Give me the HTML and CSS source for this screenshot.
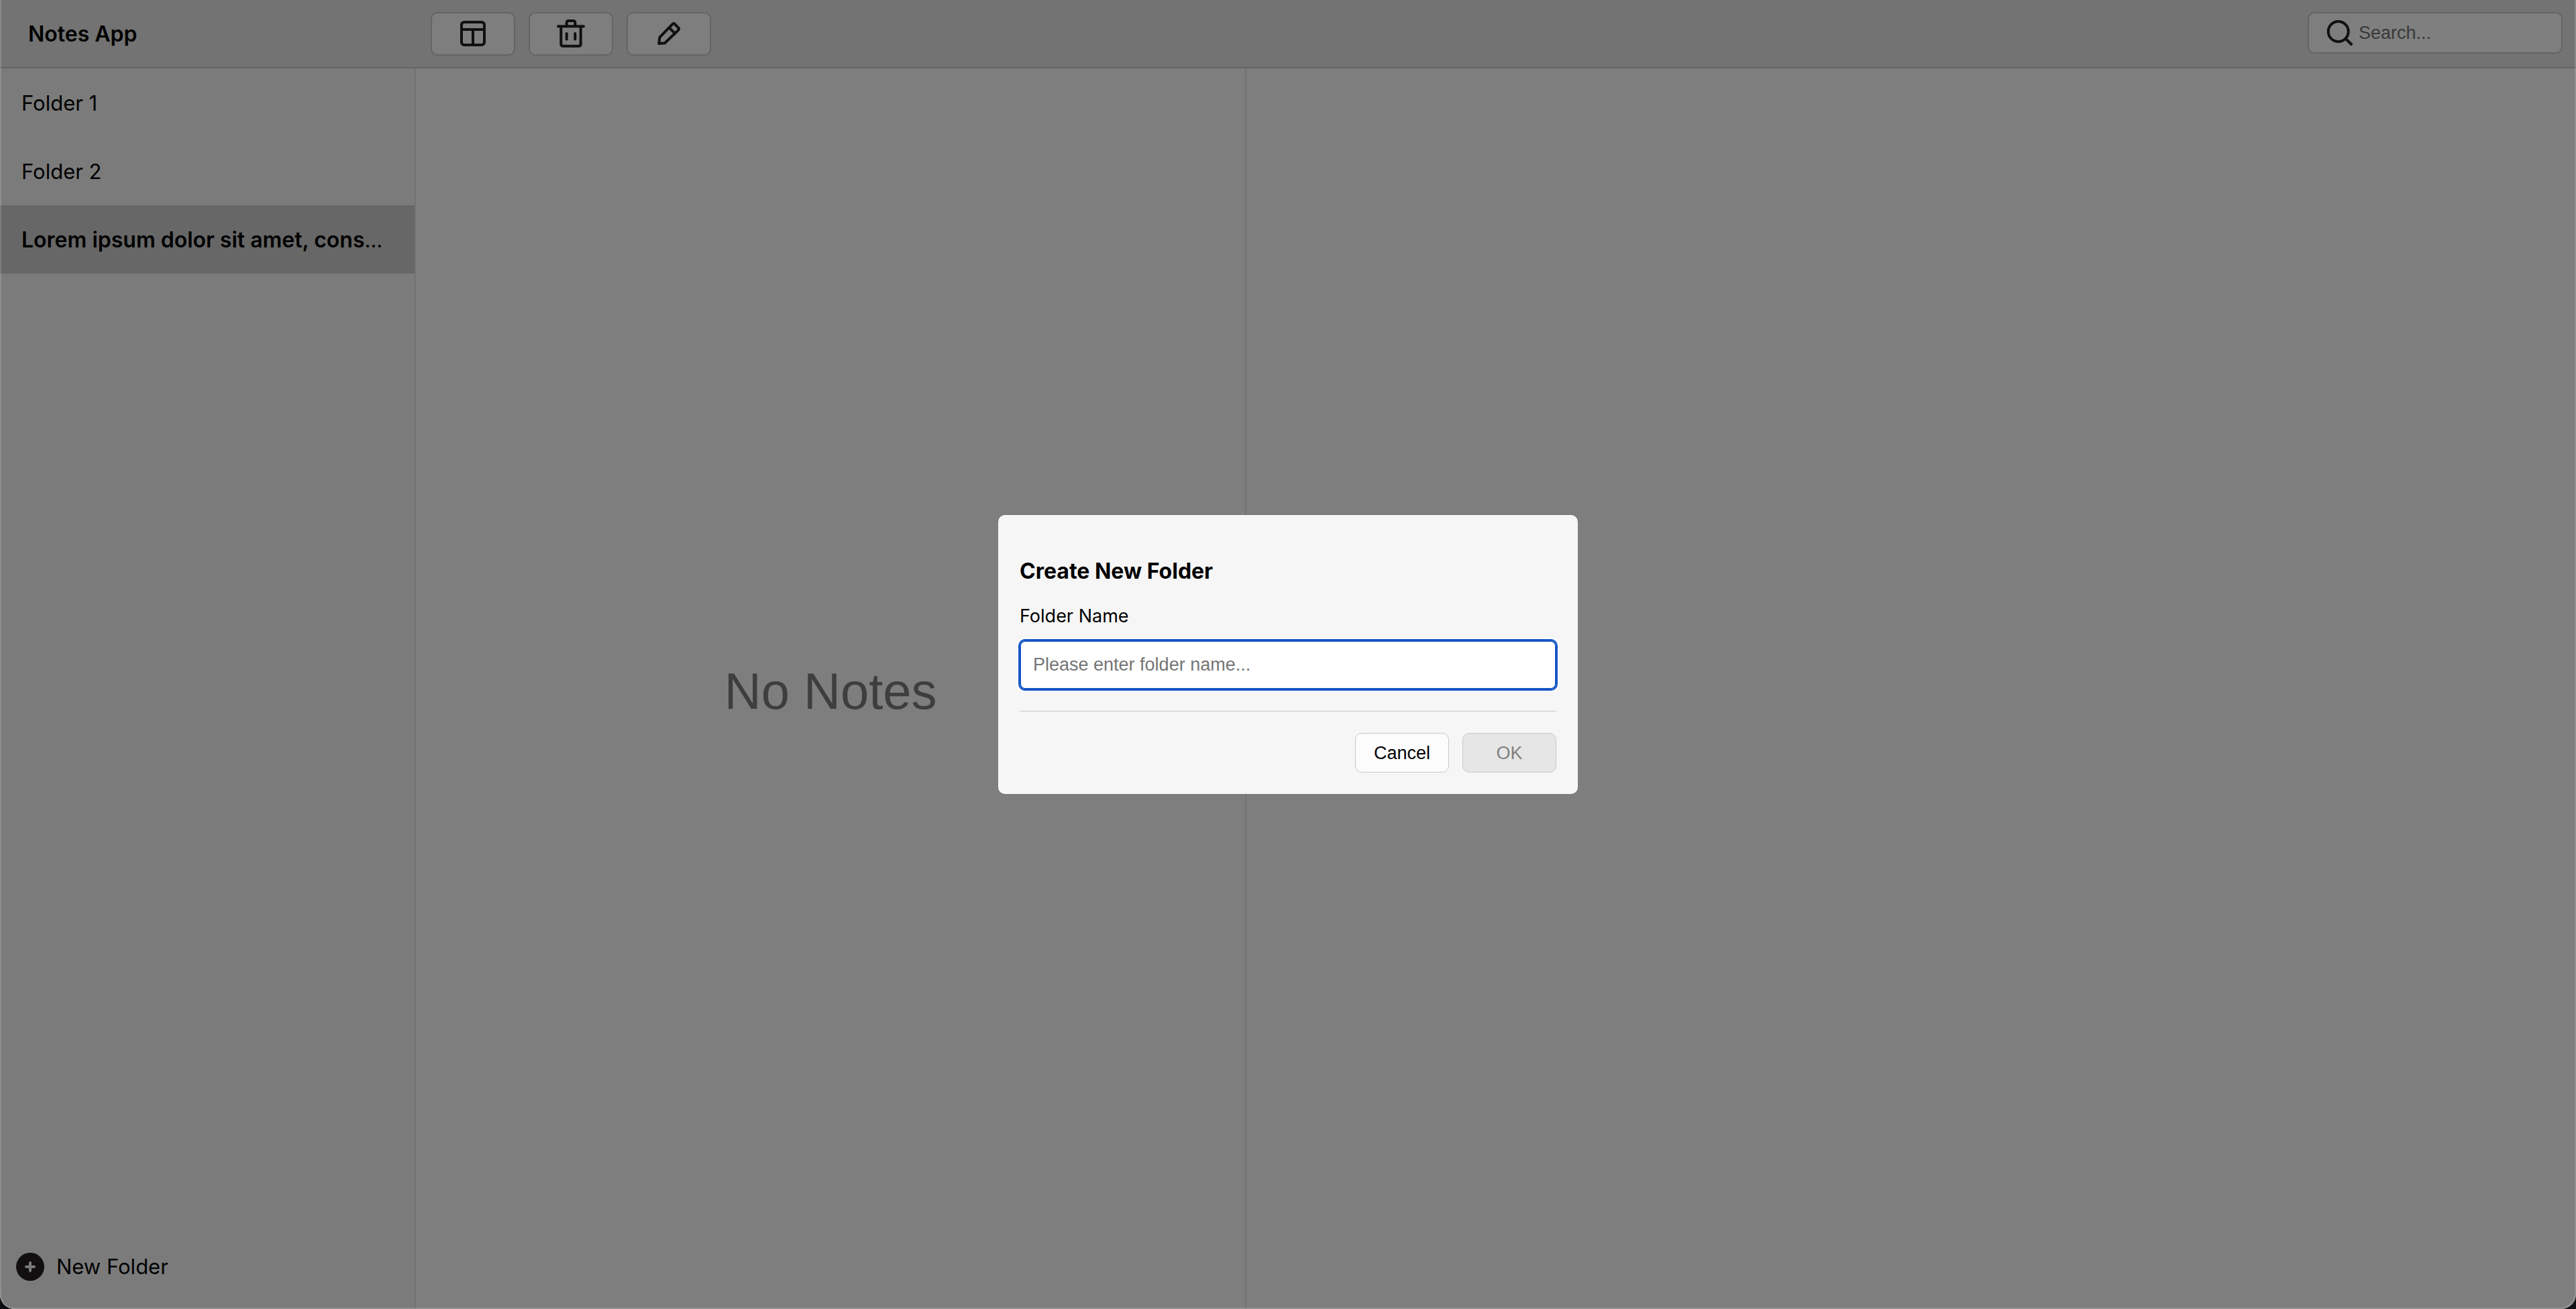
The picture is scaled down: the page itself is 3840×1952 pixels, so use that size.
FILE: index.html
```html
<!DOCTYPE html>
<html lang="en">
<head>
  <meta charset="utf-8">
  <title>Notes App</title>
  <link rel="stylesheet" href="styles.css">
</head>
<body>
  <div class="app">
    <header class="toolbar">
      <h1 class="app-title">Notes App</h1>
      <div class="toolbar-actions">
        <button class="tool-button" type="button" aria-label="Toggle layout">
          <svg class="icon" viewBox="0 0 48 48"><rect x="7" y="6" width="34" height="34" rx="4"/><path d="M7 17H41M24 17V40"/></svg>
        </button>
        <button class="tool-button" type="button" aria-label="Delete note">
          <svg class="icon" viewBox="0 0 48 48"><path d="M5 12.3H43M17.7 12V7Q17.7 4 20.7 4H27.3Q30.3 4 30.3 7V12M9.3 12.3V38.2Q9.3 41.7 12.8 41.7H35.2Q38.7 41.7 38.7 38.2V12.3M17.7 23V31.5M30.3 23V31.5"/></svg>
        </button>
        <button class="tool-button" type="button" aria-label="New note">
          <svg class="icon" viewBox="0 0 48 48"><path d="M9.2 38L10.4 28.6L29.5 9Q31.2 7.2 33 9L38.2 14.3Q40 16 38.2 17.8L18 37.2ZM24.6 14.4L33.4 23.2"/></svg>
        </button>
      </div>
      <label class="search">
        <svg class="icon" viewBox="0 0 48 48"><circle cx="21.7" cy="22" r="15"/><path d="M32.5 32.5L41 41"/></svg>
        <input class="search-input" type="text" placeholder="Search..." aria-label="Search">
      </label>
    </header>
    <main class="panes">
      <nav class="sidebar">
        <ul class="folders">
          <li class="folder">Folder 1</li>
          <li class="folder">Folder 2</li>
          <li class="folder folder-active"><strong>Lorem ipsum dolor sit amet, consectetur adipiscing elit</strong></li>
        </ul>
        <button class="new-folder" type="button">
          <svg class="plus" viewBox="0 0 42 42"><circle cx="21" cy="21" r="21"/><path d="M21 15V27M15 21H27"/></svg>
          New Folder
        </button>
      </nav>
      <section class="notes">No Notes</section>
      <section class="editor"></section>
    </main>
  </div>
  <div class="overlay">
    <form class="dialog" role="dialog" aria-labelledby="dialog-title">
      <h2 class="dialog-title" id="dialog-title">Create New Folder</h2>
      <label class="dialog-label" for="folder-name">Folder Name</label>
      <input class="dialog-input" id="folder-name" type="text" placeholder="Please enter folder name...">
      <div class="dialog-actions">
        <button class="dialog-button" type="button">Cancel</button>
        <button class="dialog-button" type="submit" disabled>OK</button>
      </div>
    </form>
  </div>
</body>
</html>
```
FILE: styles.css
```css
* { box-sizing: border-box; }

body {
  margin: 0;
  background: #0d0f12;
  color: #000;
  font: 31px/40px Inter, "Liberation Sans", sans-serif;
}

button, input { font: 27px/30px "Liberation Sans", Arial, sans-serif; }
ul { list-style: none; margin: 0; padding: 0; }

.app {
  display: flex;
  flex-direction: column;
  height: 100vh;
  border-radius: 0 0 22px 22px;
  overflow: hidden;
  background: #fcfcfc;
}

.toolbar {
  display: flex;
  align-items: flex-start;
  height: 102px;
  padding: 18px 20px 0 42px;
  background: #e6e6e6;
  border-bottom: 2px solid #c8c8c8;
}

.app-title {
  width: 600px;
  margin: 0;
  font-size: 32px;
  font-weight: 600;
  line-height: 66px;
}

.toolbar-actions { display: flex; gap: 20px; }

.tool-button {
  display: flex;
  align-items: center;
  justify-content: center;
  width: 126px;
  height: 65px;
  padding: 0;
  background: #fcfcfc;
  border: 2px solid #c8c8c8;
  border-radius: 10px;
}

.icon {
  width: 48px;
  height: 48px;
  flex: none;
  fill: none;
  stroke: #231f20;
  stroke-width: 4;
  stroke-linecap: round;
  stroke-linejoin: round;
}

.search {
  display: flex;
  align-items: center;
  width: 380px;
  height: 62px;
  margin-left: auto;
  padding: 0 20px 0 22px;
  background: #fcfcfc;
  border: 2px solid #c8c8c8;
  border-radius: 10px;
}

.search-input {
  width: 280px;
  height: 50px;
  padding: 0 4px;
  border: 0;
  background: #fff;
}

.search-input::placeholder, .dialog-input::placeholder { color: #757575; }

.panes {
  display: grid;
  grid-template-columns: 620px 5fr 8fr;
  flex: 1;
}

.sidebar {
  display: flex;
  flex-direction: column;
  justify-content: space-between;
  background: #f6f6f6;
  border-right: 2px solid #e6e6e6;
}

.folder {
  height: 102px;
  padding: 2px 32px 0;
  line-height: 100px;
  overflow: hidden;
  white-space: nowrap;
  text-overflow: ellipsis;
}

.folder-active { background: #cecece; }

.folder-active strong {
  font-size: 32px;
  font-weight: 600;
}

.new-folder {
  display: flex;
  align-items: center;
  gap: 18px;
  height: 126px;
  padding: 0 24px;
  border: 0;
  background: none;
  color: #000;
  font-family: Inter, sans-serif;
  font-size: 31px;
}

.plus {
  width: 42px;
  height: 42px;
  fill: #231f20;
  stroke-width: 4;
  stroke-linecap: round;
}

.plus path { stroke: #f6f6f6; }

.notes {
  display: flex;
  align-items: center;
  justify-content: center;
  padding-top: 8px;
  border-right: 2px solid #e6e6e6;
  color: #7c7c7c;
  font-family: "Liberation Sans", Arial, sans-serif;
  font-size: 76px;
}

.overlay {
  position: fixed;
  inset: 0;
  display: flex;
  align-items: center;
  justify-content: center;
  background: rgba(0, 0, 0, 0.5);
  border-radius: 0 0 22px 22px;
  box-shadow: inset 2px 0 rgba(255, 255, 255, 0.15), inset -2px -2px rgba(255, 255, 255, 0.15);
}

.dialog {
  display: flex;
  flex-direction: column;
  width: 864px;
  padding: 64px 32px 32px;
  background: #f6f6f6;
  border-radius: 10px;
}

.dialog-title {
  margin: 0;
  font-size: 32px;
  font-weight: 700;
}

.dialog-label {
  margin-top: 30px;
  font-size: 27px;
  line-height: 34px;
}

.dialog-input {
  height: 73px;
  margin-top: 19px;
  padding: 0 18px;
  border: 2px solid #1655c5;
  border-radius: 8px;
  outline: 2px solid #1655c5;
  box-shadow: 0 0 0 4px #fff;
  background: #fff;
}

.dialog-actions {
  display: flex;
  justify-content: flex-end;
  gap: 20px;
  margin-top: 32px;
  padding-top: 32px;
  border-top: 1px solid #c8c8c8;
}

.dialog-button {
  width: 140px;
  height: 59px;
  padding: 0;
  background: #fcfcfc;
  border: 1px solid #c8c8c8;
  border-radius: 10px;
  color: #000;
}

.dialog-button:disabled {
  background: #e6e6e6;
  color: #808080;
}
```
